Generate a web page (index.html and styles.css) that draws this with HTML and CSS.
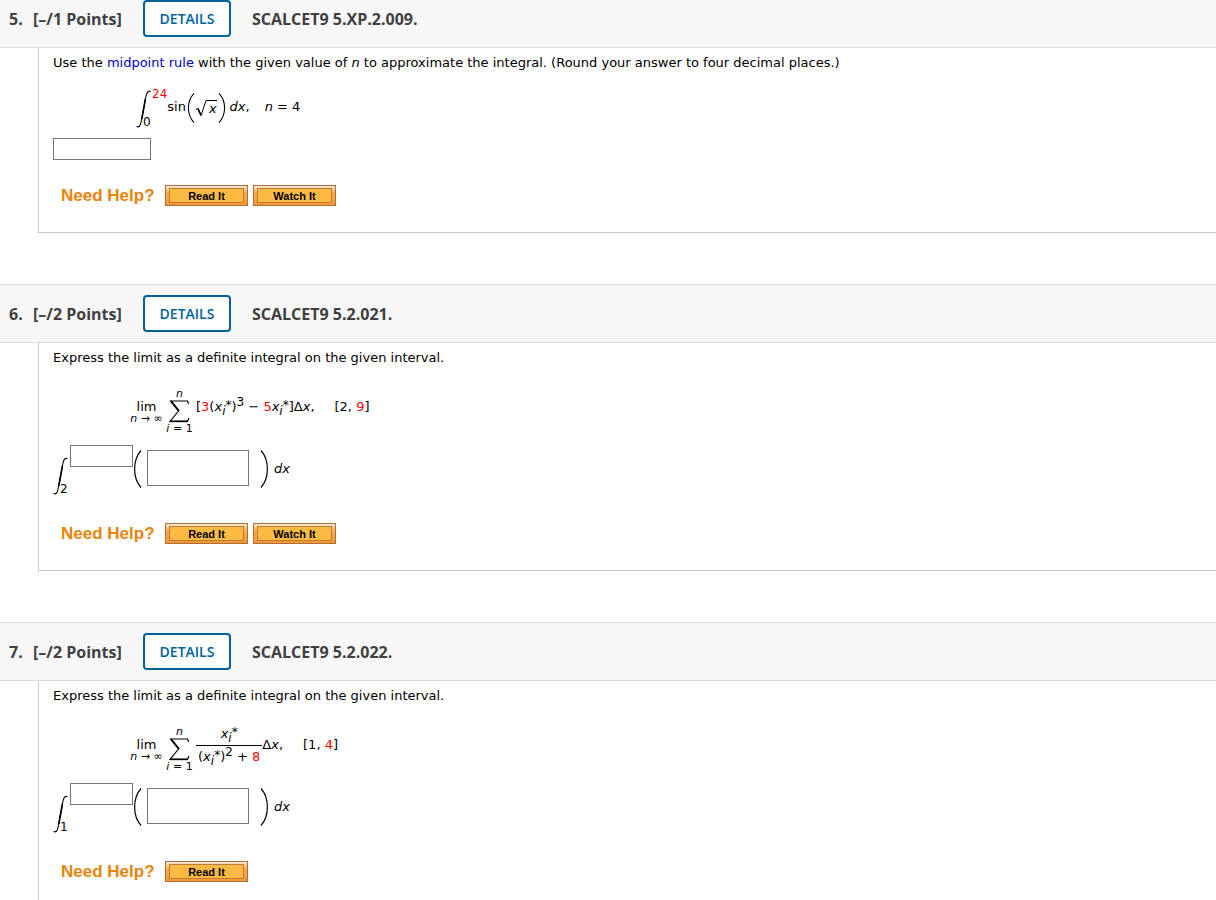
FILE: index.html
```html
<!DOCTYPE html>
<html lang="en">
<head>
  <meta charset="UTF-8">
  <meta name="viewport" content="width=device-width, initial-scale=1.0">
  <title>Assignment</title>
  <link rel="stylesheet" href="styles.css">
</head>
<body>

<!-- shapes shared by the formulas -->
<svg class="defs" aria-hidden="true">
  <symbol id="int" viewBox="0 0 15 38">
    <path d="M0.5 36.6 C3 37.6 4.2 36 5 32.5 L10 6 C10.8 2.5 12 0.6 14.5 1.6" fill="none" stroke="#000" stroke-width="1.1"/>
    <path d="M5.8 29 L9.4 9" stroke="#000" stroke-width="1.6"/>
  </symbol>
  <symbol id="sum" viewBox="0 0 21 23">
    <path d="M19.5 4 L18.5 1 H1.5 L9.5 11 L1 21.5 H18.5 L20 18" fill="none" stroke="#000" stroke-width="1.1"/>
    <path d="M2 1 L10 11" stroke="#000" stroke-width="1.8"/>
    <path d="M1 21.3 H19" stroke="#000" stroke-width="1.7"/>
  </symbol>
  <symbol id="paren" viewBox="0 0 9 38" preserveAspectRatio="none">
    <path d="M8 0.5 C-0.5 10 -0.5 28 8 37.5" fill="none" stroke="#000" stroke-width="1.2"/>
  </symbol>
</svg>

<div class="question first">
  <div class="header">
    <span class="number">5.</span>
    <span class="points">[–/1 Points]</span>
    <button class="details">DETAILS</button>
    <span class="code">SCALCET9 5.XP.2.009.</span>
  </div>
  <div class="content">
    <p>Use the <a href="#">midpoint rule</a> with the given value of <i>n</i> to approximate the integral. (Round your answer to four decimal places.)</p>

    <div class="formula short">
      <div class="integral">
        <svg class="int"><use href="#int"/></svg>
        <div class="bounds"><span class="upper red">24</span><span>0</span></div>
      </div>
      <span class="expr">sin</span>
      <svg class="paren small"><use href="#paren"/></svg>
      <span class="root">
        <svg class="radical" viewBox="0 0 12 17"><path d="M1 9.5 L3 8.5 L6 15.5 L11 0.5 H12" fill="none" stroke="#000" stroke-width="1"/><path d="M3 8.5 L6 15.5" stroke="#000" stroke-width="1.6"/></svg>
        <i>x</i>
      </span>
      <svg class="paren small right"><use href="#paren"/></svg>
      <span class="expr dx"><i>dx</i>,</span>
      <span class="expr given"><i>n</i> = 4</span>
    </div>

    <input class="answer" type="text" aria-label="Answer">

    <div class="help">
      <span>Need Help?</span>
      <button><b>Read It</b></button>
      <button><b>Watch It</b></button>
    </div>
  </div>
</div>

<div class="question">
  <div class="header">
    <span class="number">6.</span>
    <span class="points">[–/2 Points]</span>
    <button class="details">DETAILS</button>
    <span class="code">SCALCET9 5.2.021.</span>
  </div>
  <div class="content">
    <p>Express the limit as a definite integral on the given interval.</p>

    <div class="formula">
      <div class="lim"><span>lim</span><small><i>n</i> → ∞</small></div>
      <div class="sum">
        <small><i>n</i></small>
        <svg><use href="#sum"/></svg>
        <small><i>i</i> = 1</small>
      </div>
      <span class="expr">[<span class="red">3</span>(<i>x</i><sub>i</sub><sup>*</sup>)<sup class="power">3</sup> − <span class="red">5</span><i>x</i><sub>i</sub><sup>*</sup>]Δ<i>x</i>,</span>
      <span class="expr interval">[2, <span class="red">9</span>]</span>
    </div>

    <div class="result">
      <div class="integral">
        <svg class="int"><use href="#int"/></svg>
        <div class="bounds"><input class="upper" type="text" aria-label="Upper limit"><span>2</span></div>
      </div>
      <svg class="paren"><use href="#paren"/></svg>
      <input class="integrand" type="text" aria-label="Integrand">
      <svg class="paren right"><use href="#paren"/></svg>
      <i>dx</i>
    </div>

    <div class="help">
      <span>Need Help?</span>
      <button><b>Read It</b></button>
      <button><b>Watch It</b></button>
    </div>
  </div>
</div>

<div class="question">
  <div class="header">
    <span class="number">7.</span>
    <span class="points">[–/2 Points]</span>
    <button class="details">DETAILS</button>
    <span class="code">SCALCET9 5.2.022.</span>
  </div>
  <div class="content">
    <p>Express the limit as a definite integral on the given interval.</p>

    <div class="formula">
      <div class="lim"><span>lim</span><small><i>n</i> → ∞</small></div>
      <div class="sum">
        <small><i>n</i></small>
        <svg><use href="#sum"/></svg>
        <small><i>i</i> = 1</small>
      </div>
      <div class="fraction">
        <span class="top"><i>x</i><sub>i</sub><sup>*</sup></span>
        <span class="bottom">(<i>x</i><sub>i</sub><sup>*</sup>)<sup class="power">2</sup> + <span class="red">8</span></span>
      </div>
      <span class="expr">Δ<i>x</i>,</span>
      <span class="expr interval">[1, <span class="red">4</span>]</span>
    </div>

    <div class="result">
      <div class="integral">
        <svg class="int"><use href="#int"/></svg>
        <div class="bounds"><input class="upper" type="text" aria-label="Upper limit"><span>1</span></div>
      </div>
      <svg class="paren"><use href="#paren"/></svg>
      <input class="integrand" type="text" aria-label="Integrand">
      <svg class="paren right"><use href="#paren"/></svg>
      <i>dx</i>
    </div>

    <div class="help">
      <span>Need Help?</span>
      <button><b>Read It</b></button>
    </div>
  </div>
</div>

</body>
</html>
```
FILE: styles.css
```css
* {
  box-sizing: border-box;
}

body {
  margin: 0;
  background-color: #fff;
  color: #000;
  font-family: Verdana, 'DejaVu Sans', sans-serif;
  font-size: 13px;
  line-height: 16px;
}

.defs {
  display: none;
}

svg {
  display: block;
  flex: none;
}

.question {
  margin-bottom: 51px;
}

.header {
  display: flex;
  align-items: center;
  padding: 10px 9px;
  background-color: #f7f7f7;
  border-top: 1px solid #ddd;
  border-bottom: 1px solid #ddd;
  color: #404040;
  font-family: 'Open Sans', sans-serif;
  font-size: 16px;
  font-weight: bold;
}

.first .header {
  padding-top: 0;
  border-top: none;
}

.number {
  width: 24px;
}

.points {
  width: 110px;
}

.details {
  width: 88px;
  height: 37px;
  margin-right: 21px;
  padding: 0;
  background-color: #fff;
  border: 2px solid #006298;
  border-radius: 4px;
  color: #006298;
  font-family: 'Open Sans', sans-serif;
  font-size: 14px;
  font-weight: 600;
  cursor: pointer;
}

.content {
  margin-left: 38px;
  padding: 7px 14px 26px;
  border-left: 1px solid #c8c8c8;
  border-bottom: 1px solid #c8c8c8;
}

p {
  margin: 0;
}

a {
  color: #0000cc;
  text-decoration: none;
}

input {
  display: block;
  height: 22px;
  margin: 0;
  padding: 1px 2px;
  background-color: #fff;
  border: 1px solid #767676;
}

.red {
  color: #f00;
}

/* formulas */
.formula {
  display: flex;
  align-items: center;
  height: 48px;
  margin: 21px 0 10px 78px;
}

.formula.short {
  height: 40px;
  margin: 17px 0 10px 83px;
}

.expr {
  padding-bottom: 8px;
  white-space: nowrap;
}

.short .expr {
  padding-bottom: 2px;
}

.interval {
  margin-left: 20px;
}

.given {
  margin-left: 15px;
}

.dx {
  margin-left: 4px;
}

sub, sup {
  font-size: 12px;
  line-height: 0;
}

sub {
  font-style: italic;
}

sup {
  vertical-align: 2px;
}

.power {
  vertical-align: 5px;
}

small {
  font-size: 11px;
}

.lim, .sum {
  display: flex;
  flex-direction: column;
  align-items: center;
  white-space: nowrap;
}

.lim {
  width: 31px;
  margin-right: 4px;
  padding-top: 2px;
  line-height: 14px;
}

.lim small {
  line-height: 10px;
}

.sum {
  width: 27px;
  margin-right: 3px;
  line-height: 12px;
}

.sum svg {
  width: 21px;
  height: 23px;
}

.fraction {
  display: flex;
  flex-direction: column;
  align-items: center;
  padding-bottom: 8px;
}

.top {
  padding-bottom: 3px;
}

.bottom {
  padding: 3px 2px 0;
  border-top: 1px solid #000;
}

.integral {
  display: flex;
  align-items: flex-end;
}

.int {
  width: 15px;
  height: 38px;
}

.bounds {
  display: flex;
  flex-direction: column;
  justify-content: space-between;
  height: 40px;
  margin-left: -8px;
  font-size: 12px;
  line-height: 12px;
}

.bounds .upper {
  margin-left: 9px;
}

.paren {
  width: 9px;
  height: 38px;
}

.paren.small {
  width: 8px;
  height: 30px;
  margin-left: 1px;
}

.right {
  transform: scaleX(-1);
}

.root {
  display: flex;
}

.radical {
  width: 12px;
  height: 17px;
}

.root i {
  padding-left: 2px;
  border-top: 1px solid #000;
}

/* answers */
.answer {
  width: 98px;
}

.result {
  display: flex;
  align-items: center;
  height: 50px;
}

.result .bounds {
  height: 50px;
}

.result .upper {
  width: 63px;
  margin-left: 10px;
}

.result .paren {
  margin-bottom: 2px;
}

.integrand {
  width: 102px;
  height: 36px;
  margin: 0 11px 4px 5px;
}

.result > i {
  margin: 0 0 2px 5px;
}

.help {
  display: flex;
  align-items: center;
  gap: 5px;
  height: 21px;
  margin-top: 28px;
  padding-left: 8px;
  font-family: Arial, 'Liberation Sans', sans-serif;
}

.first .help {
  margin-top: 25px;
}

.help span {
  width: 99px;
  color: #ea8308;
  font-size: 17px;
  font-weight: bold;
}

.help button {
  width: 83px;
  height: 21px;
  padding: 2px 3px;
  background: linear-gradient(#fdeada, #fda850 35%, #fb9630);
  border: 1px solid #a8703a;
  font-family: inherit;
  font-size: 11px;
  cursor: pointer;
}

.help b {
  display: block;
  padding-top: 1px;
  background-color: #fdba43;
  border: 1px solid #b87f3a;
  line-height: 12px;
}
```
